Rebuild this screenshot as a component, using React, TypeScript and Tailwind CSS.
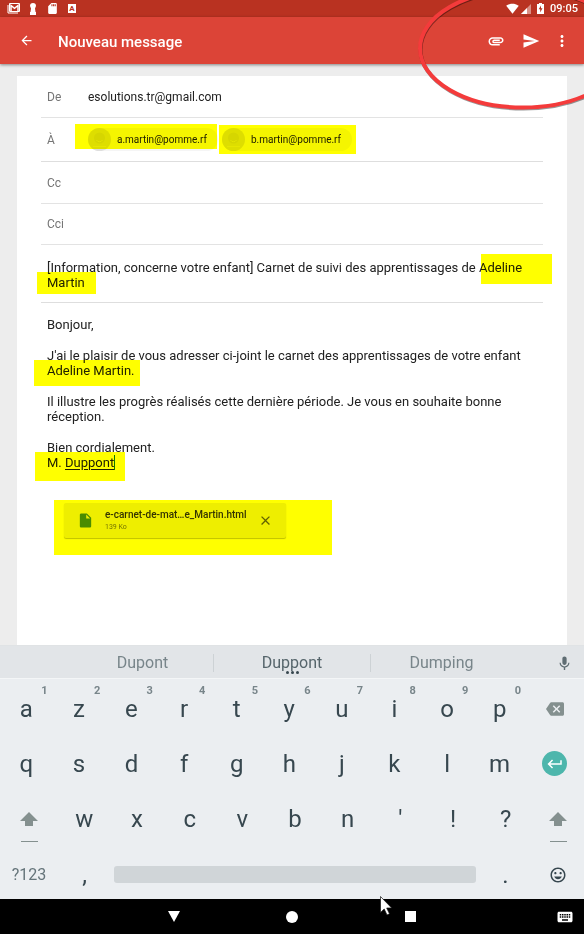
import type { ReactNode } from 'react';
import {
  MdArrowBack,
  MdAttachment,
  MdBackspace,
  MdClose,
  MdInsertDriveFile,
  MdKeyboard,
  MdKeyboardReturn,
  MdMic,
  MdMood,
  MdMoreVert,
  MdSdCard,
  MdSend,
  MdSignalWifi4Bar,
} from 'react-icons/md';

/** Yellow marker laid over text; place and size come from className. */
function Marker({ className }: { className: string }) {
  return (
    <span
      aria-hidden="true"
      className={`pointer-events-none absolute bg-[#ffff00] mix-blend-multiply ${className}`}
    />
  );
}

function StatusBar() {
  return (
    <div className="flex h-[17px] items-center bg-[#b93221] pr-1.5 pl-[7px] text-white">
      <div className="flex items-center gap-[9px]">
        <svg width="13" height="11" viewBox="0 0 13 11" aria-hidden="true">
          <path d="M1 2v8h10" fill="none" stroke="#fff" strokeWidth="1" />
          <path d="M2.500 .5h10v8h-10z" fill="none" stroke="#fff" strokeWidth="1" />
          <path d="M4 8.500v-6l3.500 2.800L11 2.500v6" fill="none" stroke="#fff" strokeWidth="1.500" />
        </svg>
        <svg width="8" height="12" viewBox="0 0 8 12" aria-hidden="true">
          <path d="M4 0a3 3 0 0 1 3 3L6 5.500 6.500 9H7v3H1V9h.5L2 5.500 1 3a3 3 0 0 1 3-3z" fill="#fff" />
        </svg>
        <MdSdCard size={13} aria-hidden="true" />
        <span className="flex h-[9px] w-2 items-center justify-center bg-white text-[8px] leading-none font-bold text-[#b93221]">
          A
        </span>
      </div>
      <div className="ml-auto flex items-center">
        <MdSignalWifi4Bar size={13} aria-hidden="true" />
        <svg className="ml-0.5" width="10" height="10" viewBox="0 0 10 10" aria-hidden="true">
          <path d="M0 10L10 0v10z" fill="#d98f85" />
          <path d="M0 10L6 4v6z" fill="#fff" />
        </svg>
        <svg className="ml-1.5" width="7" height="11" viewBox="0 0 7 11" aria-hidden="true">
          <path d="M2 0h3v1h2v10H0V1h2z" fill="#fff" />
          <path d="M4 2.500L1.700 6.200h1.500V9.500L5.500 5.300H4z" fill="#b93221" />
        </svg>
        <span className="ml-1.5 text-[11px] leading-4 font-medium">09:05</span>
      </div>
    </div>
  );
}

function AppBar() {
  return (
    <header className="relative flex h-[47px] items-center bg-[#dc4437] pr-[13px] pl-[19px] text-white shadow-[0_1px_3px_rgba(0,0,0,0.45)]">
      <button type="button" aria-label="Retour">
        <MdArrowBack size={15} />
      </button>
      <h1 className="mt-0.5 ml-6 text-[15px] leading-5 font-medium">Nouveau message</h1>
      <div className="ml-auto flex items-center">
        <button type="button" aria-label="Joindre un fichier">
          <MdAttachment size={18} />
        </button>
        <button type="button" aria-label="Envoyer" className="ml-[17px]">
          <MdSend size={18} />
        </button>
        <button type="button" aria-label="Plus d'options" className="ml-[13px]">
          <MdMoreVert size={18} />
        </button>
      </div>
    </header>
  );
}

function Field({ id, label, height, value = '' }: { id: string; label: string; height: string; value?: string }) {
  return (
    <div className={`flex items-center border-b border-[#e3e3e3] px-1.5 ${height}`}>
      <label htmlFor={id} className="w-[41px] shrink-0 text-xs text-[#757575]">
        {label}
      </label>
      <input id={id} defaultValue={value} className="min-w-0 flex-1 bg-transparent text-xs text-[#212121] outline-none" />
    </div>
  );
}

function Chip({ address, marker }: { address: string; marker: string }) {
  return (
    <span className="relative flex h-[23px] w-[130px] items-center rounded-full bg-[#f5f5f5]">
      <svg width="23" height="23" viewBox="0 0 23 23" aria-hidden="true">
        <circle cx="11.500" cy="11.500" r="11.500" fill="#dedede" />
        <circle cx="11.500" cy="10" r="5.500" fill="#d6d6d6" />
        <path d="M8.500 12a3.500 3.500 0 0 0 6 0" fill="none" stroke="#e6e6e6" />
        <path d="M5 18.500h13" stroke="#e6e6e6" />
      </svg>
      <span className="ml-1.5 text-[10px] leading-4 text-[#212121]">{address}</span>
      <Marker className={marker} />
    </span>
  );
}

function Attachment() {
  return (
    <div className="relative mt-[33px] ml-[23px] flex h-[35px] w-[222px] items-center rounded-xs bg-[#eeeeee] px-[13px] shadow-[0_1px_1px_rgba(0,0,0,0.25)]">
      <MdInsertDriveFile className="text-[#4a8c1c]" size={17} aria-hidden="true" />
      <div className="ml-[11px] min-w-0 flex-1">
        <p className="text-[10px] leading-3 font-medium whitespace-nowrap text-[#333333]">e-carnet-de-mat…e_Martin.html</p>
        <p className="mt-px text-[7px] leading-[10px] text-[#757575]">139 Ko</p>
      </div>
      <button type="button" aria-label="Retirer la pièce jointe" className="text-[#616161]">
        <MdClose size={15} />
      </button>
      <Marker className="top-[-3px] left-[-10px] h-[55px] w-[278px]" />
    </div>
  );
}

function Composer() {
  return (
    <main className="flex flex-1 flex-col bg-[#ededed] px-[17px] pt-3">
      <form className="flex flex-1 flex-col bg-white px-6" onSubmit={(e) => e.preventDefault()}>
        <Field id="from" label="De" height="h-[42px]" value="esolutions.tr@gmail.com" />
        <div className="flex h-11 items-center border-b border-[#dedede] px-1.5" role="group" aria-labelledby="to-label">
          <span id="to-label" className="w-[41px] shrink-0 text-xs text-[#757575]">
            À
          </span>
          <div className="flex gap-1">
            <Chip address="a.martin@pomme.rf" marker="-top-1 left-[-13px] h-[25px] w-[142px]" />
            <Chip address="b.martin@pomme.rf" marker="-top-[3px] left-[-3px] h-[29px] w-[137px]" />
          </div>
        </div>
        <Field id="cc" label="Cc" height="h-[42px]" />
        <Field id="bcc" label="Cci" height="h-[41px]" />
        <div className="relative h-[58px] border-b border-[#dedede] px-1.5 pt-[15px]">
          <textarea
            aria-label="Objet"
            rows={2}
            defaultValue="[Information, concerne votre enfant] Carnet de suivi des apprentissages de Adeline Martin"
            className="block w-full resize-none overflow-hidden bg-transparent text-[13px] leading-[15px] text-[#212121] outline-none"
          />
          <Marker className="top-[9px] right-[-9px] h-[30px] w-[71px]" />
          <Marker className="top-[27px] left-[-4px] h-[22px] w-[59px]" />
        </div>
        <div
          role="textbox"
          aria-multiline="true"
          aria-label="Message"
          contentEditable
          suppressContentEditableWarning
          spellCheck={false}
          className="flex flex-col gap-4 px-1.5 pt-3.5 text-[13px] leading-[15px] text-[#212121] outline-none"
        >
          <p>Bonjour,</p>
          <p className="relative">
            J'ai le plaisir de vous adresser ci-joint le carnet des apprentissages de votre enfant Adeline Martin.
            <Marker className="top-3 left-[-13px] h-[26px] w-[106px]" />
          </p>
          <p>Il illustre les progrès réalisés cette dernière période. Je vous en souhaite bonne réception.</p>
          <p className="relative">
            Bien cordialement.
            <br />
            M. <u className="underline-offset-2">Duppont</u>
            <span className="inline-block h-[15px] w-px bg-[#0f7c5c] align-text-bottom" />
            <Marker className="top-3 left-[-12px] h-[29px] w-[90px]" />
          </p>
        </div>
        <Attachment />
      </form>
    </main>
  );
}

function Key({ children, label, className = 'flex-1' }: { children: ReactNode; label?: string; className?: string }) {
  return (
    <button
      type="button"
      aria-label={label}
      className={`relative flex h-full items-center justify-center ${className}`}
    >
      {children}
    </button>
  );
}

function ShiftKey({ className }: { className: string }) {
  return (
    <Key label="Majuscule" className={className}>
      <span className="flex flex-col items-center gap-[15px] pt-4">
        <svg width="18" height="14" viewBox="0 0 18 14" aria-hidden="true">
          <path d="M9 0l9 9h-5v5H5V9H0z" fill="#84908f" />
        </svg>
        <span className="h-px w-[17px] bg-[#84908f]" />
      </span>
    </Key>
  );
}

function Keyboard() {
  return (
    <section aria-label="Clavier" className="bg-[#ebeef1] text-2xl text-[#37474f]">
      <div className="grid h-[33px] grid-cols-[72px_1fr_158px_1fr_72px] items-center border-t border-[#e0e3e5] bg-[#e2e5e8] pt-0.5 text-base text-[#78858a]">
        <span />
        <button type="button">Dupont</button>
        <button type="button" className="relative h-[18px] border-x border-[#cdd2d5] leading-[18px] text-[#56656b]">
          Duppont
          <span className="absolute inset-x-0 -bottom-0.5 flex justify-center gap-0.5">
            <span className="size-[3px] rounded-full bg-[#37474f]" />
            <span className="size-[3px] rounded-full bg-[#37474f]" />
            <span className="size-[3px] rounded-full bg-[#37474f]" />
          </span>
        </button>
        <button type="button">Dumping</button>
        <button type="button" aria-label="Saisie vocale" className="ml-auto pr-[11px] text-[#5f6d73]">
          <MdMic size={17} />
        </button>
      </div>
      <div className="border-t border-[#f4f6f7] pt-0.5">
        <div className="flex h-[55px]">
          {[...'azertyuiop'].map((letter, i) => (
            <Key key={letter}>
              {letter}
              <span className="absolute top-0.5 right-[5px] text-[11px] leading-4 font-bold text-[#78858a]">
                {(i + 1) % 10}
              </span>
            </Key>
          ))}
          <Key label="Effacer" className="w-[58px] text-[#84908f]">
            <MdBackspace size={18} />
          </Key>
        </div>
        <div className="flex h-[55px]">
          {[...'qsdfghjklm'].map((letter) => (
            <Key key={letter}>{letter}</Key>
          ))}
          <Key label="Entrée" className="w-[58px]">
            <span className="flex size-[25px] items-center justify-center rounded-full bg-[#4db6ac] text-white">
              <MdKeyboardReturn size={18} />
            </span>
          </Key>
        </div>
        <div className="flex h-[55px]">
          <ShiftKey className="w-[58px]" />
          {[..."wxcvbn'!?"].map((letter) => (
            <Key key={letter}>{letter}</Key>
          ))}
          <ShiftKey className="w-[52px]" />
        </div>
        <div className="flex h-[53px] pt-1">
          <Key className="w-[58px] text-base text-[#65747a]">?123</Key>
          <Key className="w-[53px]">,</Key>
          <Key label="Espace" className="flex-1 px-[3px]">
            <span className="h-[17px] flex-1 rounded-[3px] bg-[#d0d5d8]" />
          </Key>
          <Key className="w-[53px]">.</Key>
          <Key label="Émojis" className="w-[52px]">
            <MdMood size={18} />
          </Key>
        </div>
      </div>
    </section>
  );
}

function NavigationBar() {
  return (
    <nav className="relative grid h-[35px] grid-cols-[1fr_118px_118px_118px_1fr] items-center justify-items-center bg-black text-white">
      <span />
      <button type="button" aria-label="Masquer le clavier">
        <svg width="12" height="11" viewBox="0 0 12 11" aria-hidden="true">
          <path d="M0 0h12L6 11z" fill="#fff" />
        </svg>
      </button>
      <button type="button" aria-label="Accueil" className="size-3 rounded-full bg-white" />
      <button type="button" aria-label="Applications récentes" className="size-[11px] bg-white" />
      <button type="button" aria-label="Changer de clavier" className="justify-self-end pr-2.5">
        <MdKeyboard size={18} />
      </button>
      <svg
        className="pointer-events-none absolute top-[-3px] left-[65%]"
        width="13"
        height="20"
        viewBox="0 0 13 20"
        aria-hidden="true"
      >
        <path d="M.5 .5v16l3.700-3.500 2.800 6 2.500-1.200-2.800-5.800h5z" fill="#fff" stroke="#111" strokeWidth=".7" />
      </svg>
    </nav>
  );
}

export default function App() {
  return (
    <div className="relative flex min-h-screen flex-col overflow-hidden font-[Roboto,'Liberation_Sans',sans-serif]">
      <StatusBar />
      <AppBar />
      <Composer />
      <Keyboard />
      <NavigationBar />
      {/* Red ring drawing attention to the attach and send buttons */}
      <svg
        className="pointer-events-none absolute top-0 right-0"
        width="166"
        height="112"
        viewBox="0 0 166 112"
        aria-hidden="true"
      >
        <ellipse cx="105.500" cy="49.500" rx="103" ry="59" fill="none" stroke="#000" strokeOpacity=".4" strokeWidth="4" />
        <ellipse cx="105" cy="48.500" rx="103" ry="59" fill="none" stroke="#f43b3b" strokeWidth="4" />
      </svg>
    </div>
  );
}
